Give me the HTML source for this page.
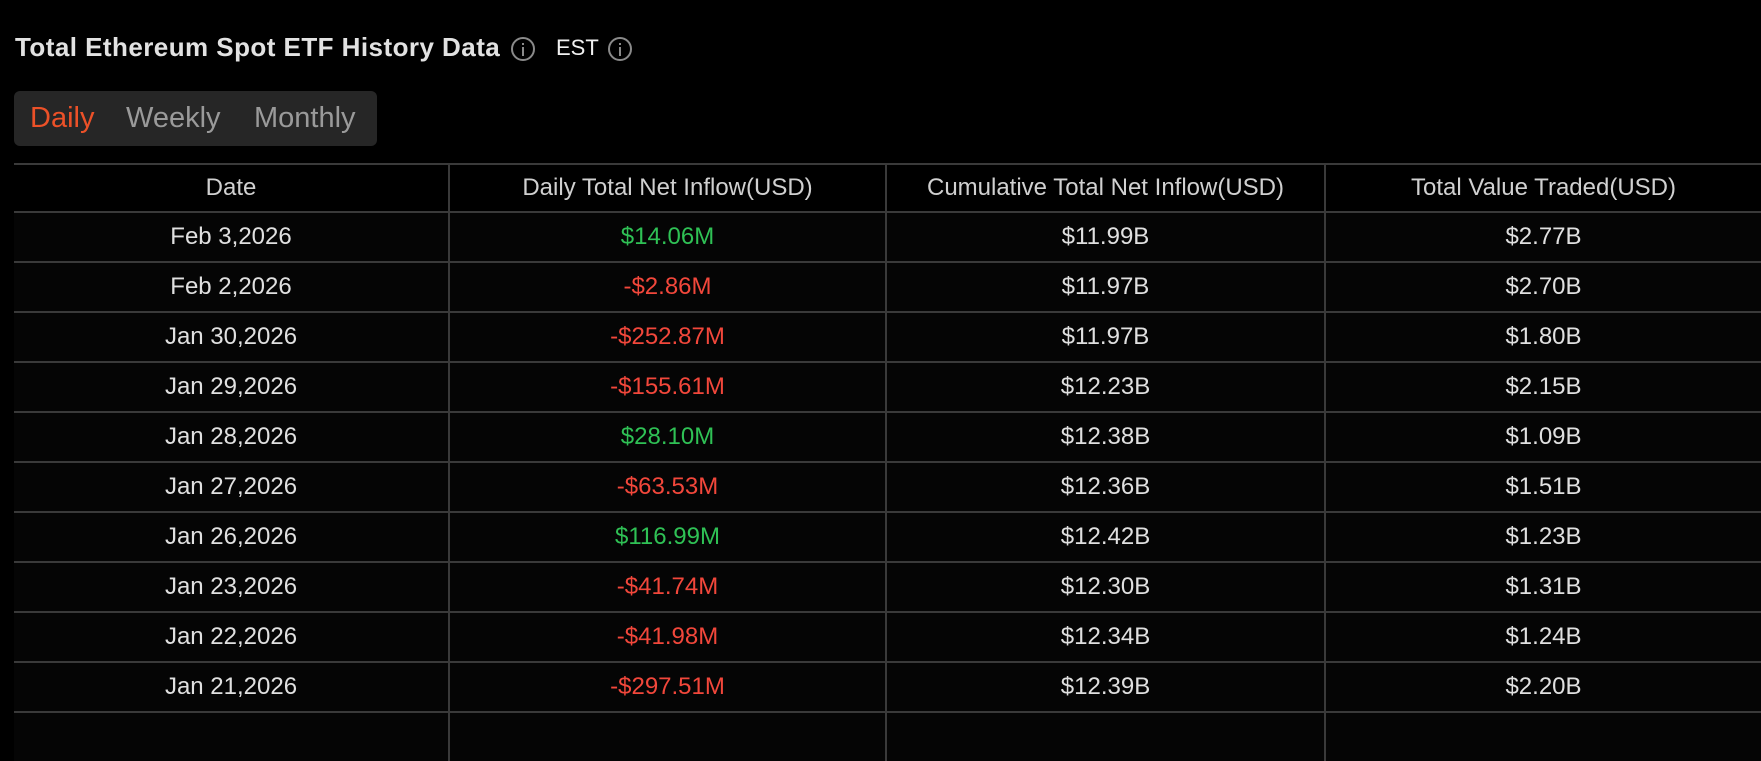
<!DOCTYPE html>
<html><head><meta charset="utf-8"><style>
html,body{margin:0;padding:0;background:#000;width:1761px;height:717px;overflow:hidden;font-family:"Liberation Sans",sans-serif;}
.title{position:absolute;left:15px;top:32px;font-size:26px;font-weight:bold;color:#e2e2e2;white-space:nowrap;letter-spacing:0.45px;}
.ic{position:absolute;width:24px;height:24px;border:2px solid #8a8a8a;border-radius:50%;box-sizing:border-box;}
.ic:before{content:"";position:absolute;left:9px;top:4px;width:2px;height:2px;background:#8a8a8a;}
.ic:after{content:"";position:absolute;left:9px;top:8px;width:2px;height:9px;background:#8a8a8a;}
.est{position:absolute;left:556px;top:35px;font-size:22px;color:#f0f0f0;}
.tabs{position:absolute;left:14px;top:91px;width:363px;height:55px;background:#262626;border-radius:6px;}
.tabs span{position:absolute;top:11px;font-size:29px;color:#9a9a9a;}
table{position:absolute;left:14px;top:163px;border-collapse:collapse;width:1747px;table-layout:fixed;}
td,th{height:48px;border-top:2px solid #3a3a3a;text-align:center;font-size:24px;color:#e0e0e0;font-weight:normal;padding:0;background:#050505;}
th{height:46px;color:#d0d0d0;background:#000;}
td+td,th+th{border-left:2px solid #3a3a3a;}
.g{color:#2fc155}.r{color:#f2473b}
</style></head><body>
<div class="title">Total Ethereum Spot ETF History Data</div>
<div class="ic" style="left:511px;top:37px"></div>
<div class="est">EST</div>
<div class="ic" style="left:608px;top:37px"></div>
<div class="tabs"><span style="left:16px;color:#ec5128">Daily</span><span style="left:112px">Weekly</span><span style="left:240px">Monthly</span></div>
<table>
<colgroup><col style="width:435px"><col style="width:437px"><col style="width:439px"><col style="width:436px"></colgroup>
<tr><th>Date</th><th>Daily Total Net Inflow(USD)</th><th>Cumulative Total Net Inflow(USD)</th><th>Total Value Traded(USD)</th></tr>
<tr><td>Feb 3,2026</td><td class="g">$14.06M</td><td>$11.99B</td><td>$2.77B</td></tr>
<tr><td>Feb 2,2026</td><td class="r">-$2.86M</td><td>$11.97B</td><td>$2.70B</td></tr>
<tr><td>Jan 30,2026</td><td class="r">-$252.87M</td><td>$11.97B</td><td>$1.80B</td></tr>
<tr><td>Jan 29,2026</td><td class="r">-$155.61M</td><td>$12.23B</td><td>$2.15B</td></tr>
<tr><td>Jan 28,2026</td><td class="g">$28.10M</td><td>$12.38B</td><td>$1.09B</td></tr>
<tr><td>Jan 27,2026</td><td class="r">-$63.53M</td><td>$12.36B</td><td>$1.51B</td></tr>
<tr><td>Jan 26,2026</td><td class="g">$116.99M</td><td>$12.42B</td><td>$1.23B</td></tr>
<tr><td>Jan 23,2026</td><td class="r">-$41.74M</td><td>$12.30B</td><td>$1.31B</td></tr>
<tr><td>Jan 22,2026</td><td class="r">-$41.98M</td><td>$12.34B</td><td>$1.24B</td></tr>
<tr><td>Jan 21,2026</td><td class="r">-$297.51M</td><td>$12.39B</td><td>$2.20B</td></tr>
<tr><td></td><td></td><td></td><td></td></tr>
</table>
</body></html>
